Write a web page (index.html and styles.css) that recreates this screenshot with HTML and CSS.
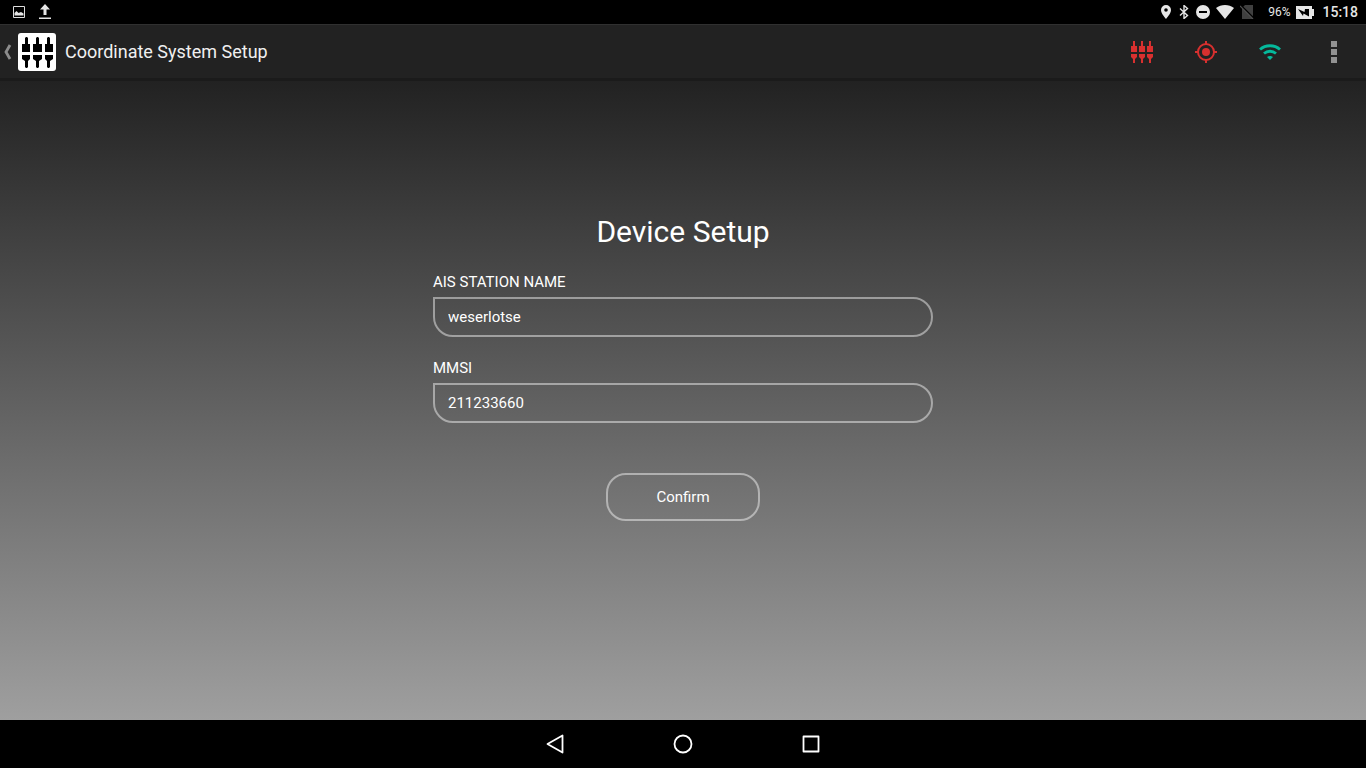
FILE: index.html
```html
<!DOCTYPE html>
<html lang="en">
<head>
<meta charset="utf-8">
<meta name="viewport" content="width=device-width, initial-scale=1">
<title>Coordinate System Setup</title>
<link rel="stylesheet" href="styles.css">
</head>
<body>
<div class="status-bar">
  <div class="status-left">
    <svg width="14" height="14" viewBox="0 0 14 14"><path d="M1.500 1.500h11v11h-11z" fill="none" stroke="#ddd"/><path d="M2.500 10.500V8l2-2 2 2 2.500-1 2.500 1.500v2z" fill="#e6e6e6"/></svg>
    <svg width="12" height="16" viewBox="0 0 12 16"><path d="M6 0l5 5.500H7.500V11h-3V5.500H1zM0 13.500h12V15H0z" fill="#e6e6e6"/></svg>
  </div>
  <div class="status-right">
    <svg class="pin" width="10" height="14" viewBox="0 0 10 14"><path fill-rule="evenodd" d="M5 0a5 5 0 0 0-5 5c0 3.500 5 9 5 9s5-5.500 5-9a5 5 0 0 0-5-5zm0 3.200a1.800 1.800 0 1 1 0 3.600 1.800 1.800 0 0 1 0-3.600z" fill="#e6e6e6"/></svg>
    <svg class="bluetooth" width="10" height="14" viewBox="0 0 10 14"><path d="M1 3.500l7.500 7L5 13.500V.5l3.500 3-7.500 7" fill="none" stroke="#e6e6e6" stroke-width="1.400"/></svg>
    <svg class="dnd" width="14" height="14" viewBox="0 0 14 14"><circle cx="7" cy="7" r="7" fill="#e6e6e6"/><path d="M3 6h8v2H3z"/></svg>
    <svg class="signal" width="18" height="14" viewBox="0 0 18 14"><path d="M0 3c5-4 13-4 18 0L9 14z" fill="#e6e6e6"/></svg>
    <svg class="sim" width="14" height="14" viewBox="0 0 14 14"><path d="M5 0h8v14H2V3z" fill="#404040"/><path d="M1 .5l13 13" stroke="#000" stroke-width="1.600"/><path d="M0 1l13 13" stroke="#505050" stroke-width="1.200"/></svg>
    <span class="percent">96%</span>
    <svg class="battery" width="18" height="13" viewBox="0 0 18 13"><path d="M0 0h16v3h2v7h-2v3H0z" fill="#e6e6e6"/><path d="M2 3l6.500 3 .5-3h4v7.500L7.500 7.500 7 10z" fill="#000"/></svg>
    <time class="clock">15:18</time>
  </div>
</div>

<header class="app-bar">
  <button class="up" aria-label="Navigate up">
    <svg width="9" height="16" viewBox="0 0 9 16"><path d="M7 1L3 8l4 7" fill="none" stroke="#8c8c8c" stroke-width="2.800"/></svg>
    <svg width="40" height="40" viewBox="0 0 40 40"><rect x="1" y="1" width="38" height="38" rx="3" fill="#fff"/><path d="M8 6l1-1h1l1 1v6h2v8H5v-8h3zM5 23h8v4l-2 2v6l-1 1H9l-1-1v-6l-3-2z"/><path d="M19 6l1-1h1l1 1v6h3v8h-9v-8h3zM16 23h9v4l-3 2v6l-1 1h-1l-1-1v-6l-3-2z"/><path d="M30 6l1-1h1l1 1v6h3v8h-8v-8h2zM28 23h8v4l-3 2v6l-1 1h-1l-1-1v-6l-2-2z"/></svg>
  </button>
  <h1 class="app-title">Coordinate System Setup</h1>
  <nav class="actions" aria-label="Actions">
    <button class="action" aria-label="Connectors"><svg width="24" height="24" viewBox="0 0 24 24" fill="#d8302f"><path d="M3 1h2v5h2v6H1V6h2zM1 14h6v3l-2 2v4H3v-4l-2-2z"/><path d="M11 1h2v5h2v6H9V6h2zM9 14h6v3l-2 2v4h-2v-4l-2-2z"/><path d="M19 1h2v5h2v6h-6V6h2zM17 14h6v3l-2 2v4h-2v-4l-2-2z"/></svg></button>
    <button class="action" aria-label="Position"><svg width="24" height="24" viewBox="0 0 24 24"><circle cx="12" cy="12" r="8" fill="none" stroke="#d8302f" stroke-width="2"/><circle cx="12" cy="12" r="4" fill="#d8302f"/><path d="M12 1v3M12 20v3M1 12h3M20 12h3" stroke="#d8302f" stroke-width="2"/></svg></button>
    <button class="action" aria-label="Wireless"><svg width="24" height="24" viewBox="0 0 24 24"><path d="M2 9.500c5.500-5 14.500-5 20 0M6 13.500c3.500-3 8.500-3 12 0" fill="none" stroke="#05b99c" stroke-width="2.800"/><path d="M9 17c1.800-1.400 4.200-1.400 6 0l-3 3z" fill="#05b99c"/></svg></button>
    <button class="action" aria-label="More options"><svg width="24" height="24" viewBox="0 0 24 24"><path d="M9 1h6v6H9zM9 9h6v6H9zM9 17h6v6H9z" fill="#929292"/></svg></button>
  </nav>
</header>

<main class="content">
  <form class="setup">
    <h2 class="setup-title">Device Setup</h2>
    <div class="field">
      <label for="station">AIS STATION NAME</label>
      <input id="station" type="text" value="weserlotse">
    </div>
    <div class="field">
      <label for="mmsi">MMSI</label>
      <input id="mmsi" type="text" inputmode="numeric" value="211233660">
    </div>
    <button class="confirm" type="button">Confirm</button>
  </form>
</main>

<nav class="system-nav" aria-label="System">
  <button aria-label="Back"><svg width="20" height="20" viewBox="0 0 20 20"><path d="M17.500 1.500v17L2.500 10z"/></svg></button>
  <button aria-label="Home"><svg width="20" height="20" viewBox="0 0 20 20"><circle cx="10" cy="10" r="8.500"/></svg></button>
  <button aria-label="Recent apps"><svg width="20" height="20" viewBox="0 0 20 20"><path d="M2.500 2.500h15v15h-15z"/></svg></button>
</nav>
</body>
</html>
```
FILE: styles.css
```css
* {
  box-sizing: border-box;
}

body {
  margin: 0;
  min-height: 100vh;
  display: flex;
  flex-direction: column;
  background: #000;
  color: #fff;
  font-family: Roboto, sans-serif;
  font-size: 15px;
}

button,
input {
  margin: 0;
  color: inherit;
  font: inherit;
}

button {
  padding: 0;
  border: 0;
  background: none;
}

svg {
  display: block;
}

.status-bar {
  display: flex;
  align-items: center;
  justify-content: space-between;
  height: 24px;
  padding: 0 8px 0 12px;
  color: #e6e6e6;
}

.status-left {
  display: flex;
  align-items: center;
  gap: 13px;
}

.status-right {
  display: flex;
  align-items: center;
}

.pin {
  margin-right: 8px;
}

.bluetooth {
  margin-right: 7px;
}

.dnd {
  margin-right: 6px;
}

.signal {
  margin-right: 6px;
}

.sim {
  margin-right: 14px;
}

.percent {
  margin-right: 6px;
  font-size: 12px;
}

.battery {
  margin-right: 8px;
}

.clock {
  font-size: 14px;
  font-weight: 500;
}

.app-bar {
  display: flex;
  align-items: center;
  height: 57px;
  border-top: 1px solid #303030;
  border-bottom: 3px solid #1b1b1b;
  background: #222;
}

.up {
  display: flex;
  align-items: center;
  gap: 5px;
  padding-left: 3px;
}

.app-title {
  margin: 0 0 0 8px;
  flex: 1;
  color: #f0f0f0;
  font-size: 18px;
  font-weight: 400;
  line-height: 24px;
}

.actions {
  display: flex;
}

.action {
  display: grid;
  place-items: center;
  width: 64px;
  height: 48px;
}

.content {
  flex: 1;
  padding: 132px 16px 24px;
  background: linear-gradient(#222, #9f9f9f);
}

.setup {
  display: flex;
  flex-direction: column;
  gap: 22px;
  max-width: 500px;
  margin: 0 auto;
}

.setup-title {
  margin: 0;
  font-size: 30px;
  font-weight: 400;
  line-height: 38px;
  text-align: center;
}

.field {
  display: flex;
  flex-direction: column;
  gap: 6px;
}

.field label {
  line-height: 18px;
}

.field input {
  width: 100%;
  height: 40px;
  padding: 0 13px;
  border: 2px solid rgba(255, 255, 255, 0.45);
  border-radius: 0 20px 20px 20px;
  outline: 0;
  background: transparent;
}

.confirm {
  align-self: center;
  height: 48px;
  margin-top: 28px;
  padding: 0 48px;
  border: 2px solid rgba(255, 255, 255, 0.45);
  border-radius: 20px;
}

.system-nav {
  display: flex;
  align-items: center;
  justify-content: center;
  height: 48px;
}

.system-nav button {
  display: grid;
  place-items: center;
  width: 128px;
  height: 48px;
}

.system-nav svg {
  fill: none;
  stroke: #fff;
  stroke-width: 1.8;
  stroke-linejoin: round;
}
```
